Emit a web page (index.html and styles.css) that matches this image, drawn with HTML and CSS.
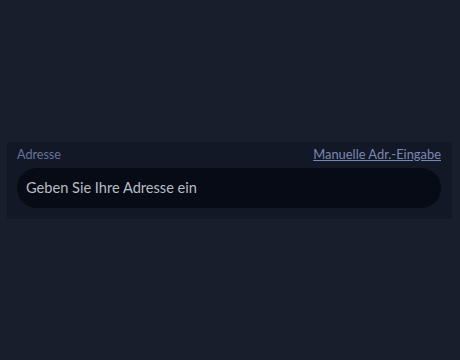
FILE: index.html
```html
<!DOCTYPE html>
<html lang="de">
<head>
<meta charset="utf-8">
<link rel="stylesheet" href="styles.css">
</head>
<body>
<div class="page">
  <div class="panel">
    <div class="head">
      <span class="label">Adresse</span>
      <a class="link" href="#">Manuelle Adr.-Eingabe</a>
    </div>
    <div class="input">Geben Sie Ihre Adresse ein</div>
  </div>
</div>
</body>
</html>
```
FILE: styles.css
```css
html, body {
  margin: 0;
  height: 100%;
  background: #191e2d;
}
body {
  font-family: Lato, "Noto Sans", sans-serif;
}
.page {
  height: 360px;
  display: flex;
  align-items: center;
  padding: 0 8px 0 7px;
  box-sizing: border-box;
}
.panel {
  flex: 1;
  background: #131826;
  padding: 4px 11px 11px 10px;
  display: flex;
  flex-direction: column;
  gap: 5px;
}
.head {
  display: flex;
  justify-content: space-between;
  align-items: center;
  height: 17px;
}
.label {
  font-size: 12.6px;
  color: #64739a;
}
.link {
  font-size: 12.9px;
  color: #7888b4;
  text-decoration: underline;
}
.input {
  height: 40px;
  border-radius: 20px;
  background: #060b15;
  color: #b9bcc4;
  font-size: 14.6px;
  display: flex;
  align-items: center;
  padding-left: 9px;
}
```
